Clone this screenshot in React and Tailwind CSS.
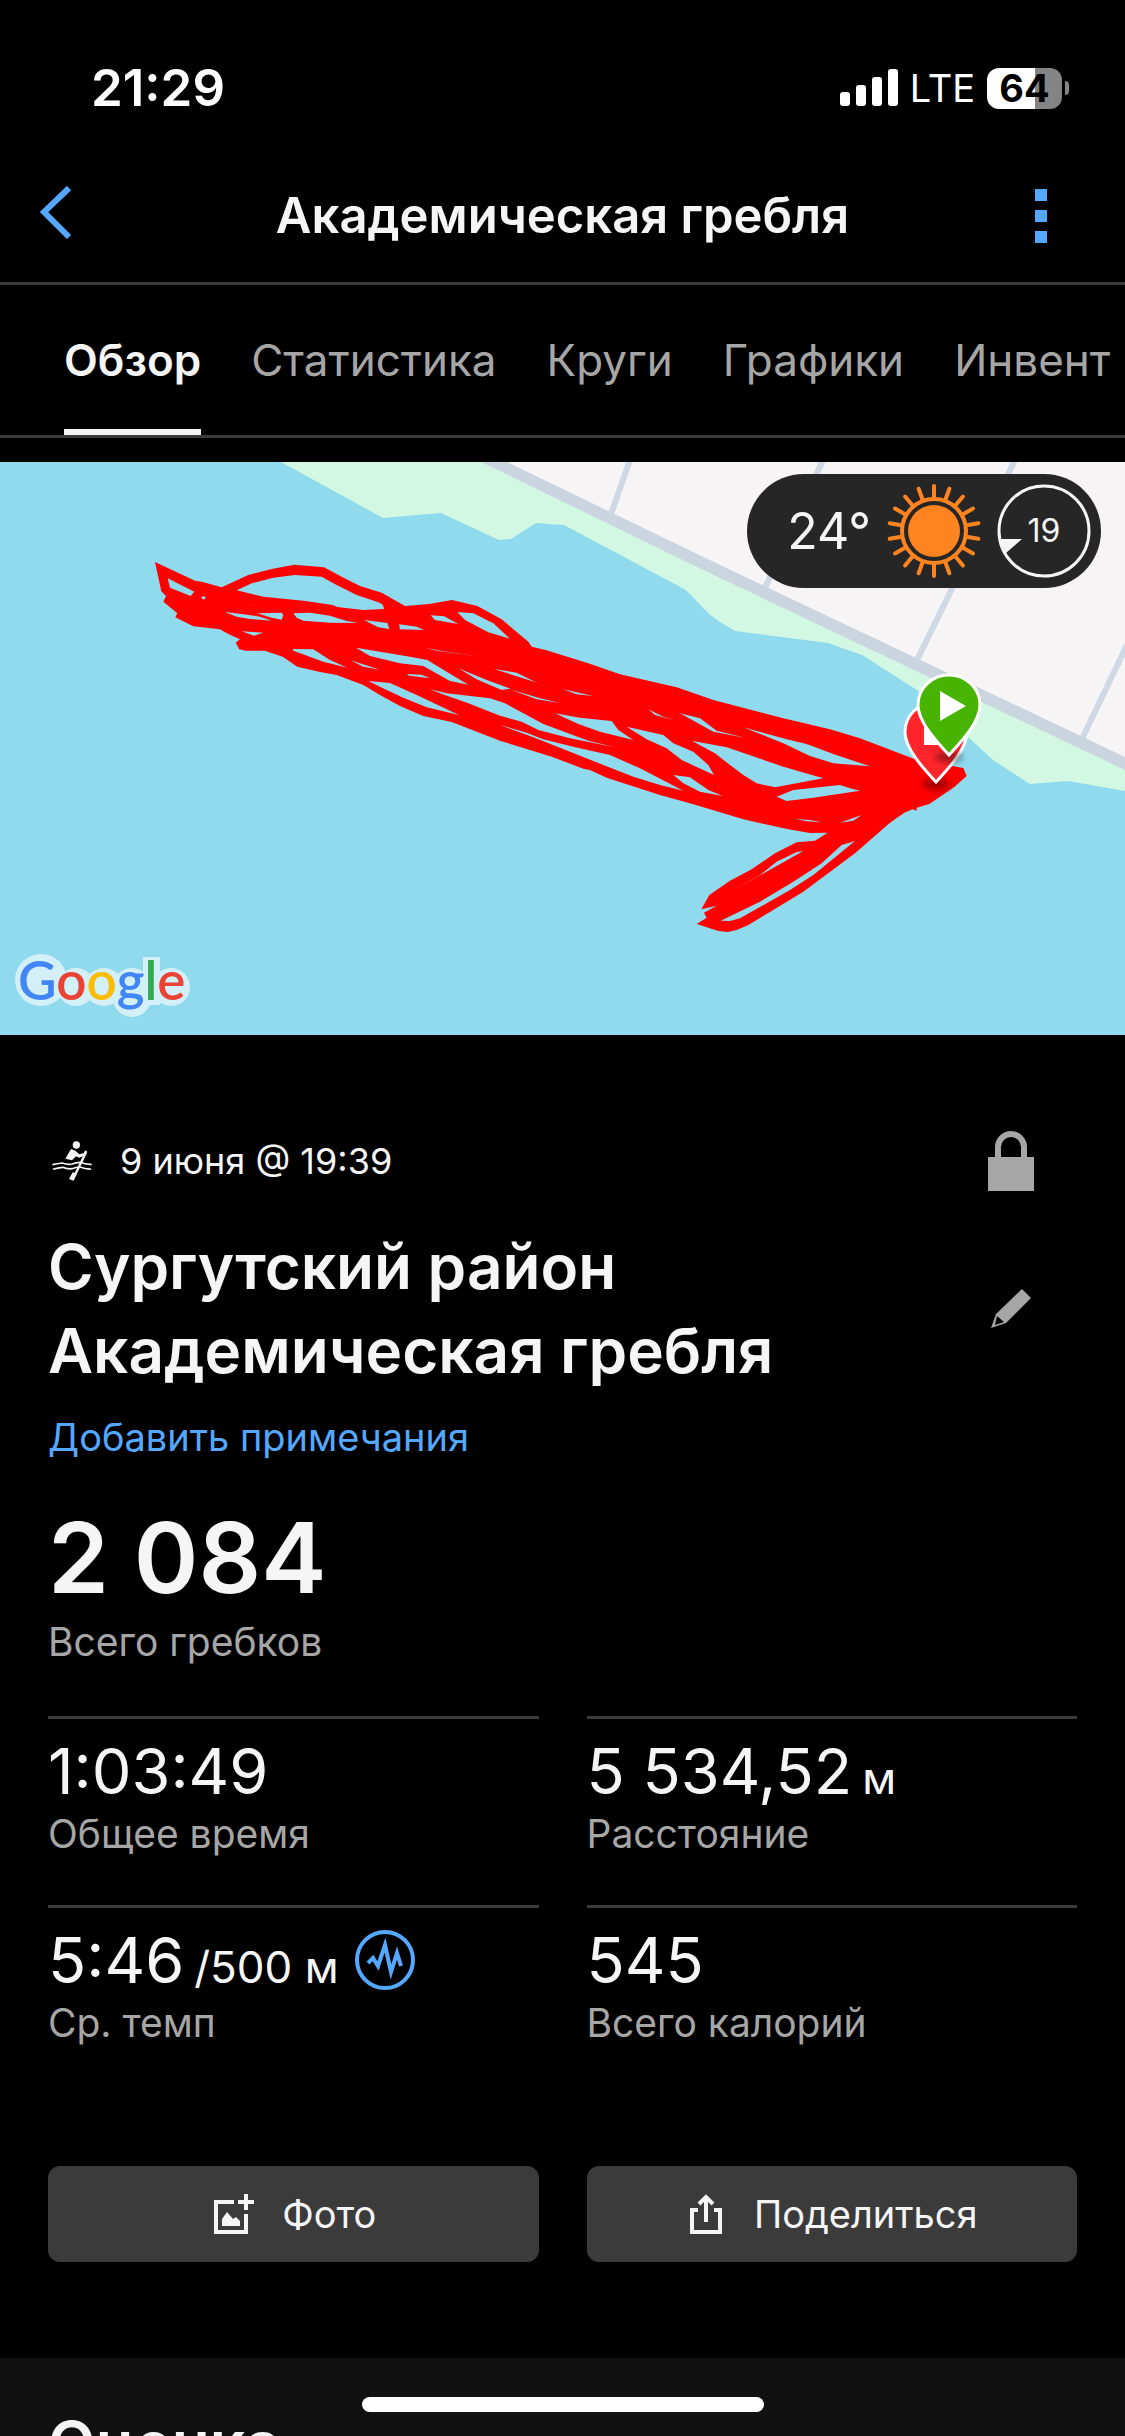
const TABS = ['Обзор', 'Статистика', 'Круги', 'Графики', 'Инвент']

const STATS = [
  { value: '1:03:49', label: 'Общее время' },
  { value: '5 534,52', unit: 'м', label: 'Расстояние' },
  { value: '5:46', unit: '/500 м', label: 'Ср. темп', graph: true },
  { value: '545', label: 'Всего калорий' },
]

// outer edge of the recorded track, in thirds of a map pixel
const TRACK =
  '45,36 165,92 185,95 245,112 325,75 395,57 463,44 552,52 605,80 660,108 725,128 795,168 868,162 936,150 1012,168 1085,208 1165,275 1175,290 1217,300 1345,340 1440,373 1610,412 1720,450 1930,505 2070,538 2160,565 2325,628 2470,654 2480,678 2442,712 2368,762 2330,773 2330,782 2318,778 2293,788 2250,818 2145,910 1990,1025 1825,1125 1790,1140 1763,1146 1735,1143 1670,1122 1700,1103 1692,1088 1730,1067 1684,1078 1708,1035 1770,992 1835,958 1905,910 1970,877 2025,872 2063,848 2010,849 1945,838 1810,808 1660,763 1560,735 1400,683 1350,660 1330,656 1235,620 1080,572 935,516 850,498 780,468 720,435 670,405 590,375 540,366 472,350 428,320 375,302 318,302 298,298 287,278 300,268 265,252 240,238 160,229 106,202 112,190 70,155 78,138 64,124'

// water that shows between the laps
const GAPS = [
  '83,85 163,125 152,138 90,113',
  '183,142 192,138 198,144 190,149',
  '290,121 335,100 400,83 465,75 545,80 590,105 650,135 715,157 727,163 733,177 670,180 592,171 578,165 490,152 370,140',
  '255,186 310,193 360,200 395,212 330,207 290,200',
  '352,190 425,188 430,195 425,209 395,203',
  '460,190 510,188 570,197 620,213 655,219 570,218 490,212 470,203',
  '672,210 742,219 748,237 715,232',
  '777,223 830,230 852,240 780,238',
  '872,196 912,199 955,222 885,210',
  '952,186 1000,190 1060,220 1110,266 1045,247 975,210',
  '305,244 370,248 342,257',
  '312,162 355,168 330,165',
  '458,297 520,298 570,330 622,353 550,335 460,302',
  '648,293 810,320 862,330 920,365 985,404 930,393 850,348 780,340 690,318',
  '632,331 720,359 670,350',
  '800,372 845,374 870,385 808,377',
  '685,393 750,399 830,435 957,495 860,472 790,443 740,420',
  '870,418 920,430 1050,445 1095,460 1210,522 1345,572 1425,592 1290,565 1195,540 1145,515 1080,497 985,460 900,430',
  '855,293 910,304 1020,320 890,302',
  '955,355 1040,390 1112,416 1085,420 1010,388',
  '1110,418 1200,445 1262,459 1190,448',
  '1062,357 1130,368 1200,403 1260,428 1185,396',
  '1080,525 1160,548 1210,568 1300,590 1410,615 1500,655 1630,722 1560,705 1480,680 1390,645 1290,605 1180,562',
  '1600,675 1650,682 1705,720 1748,738 1680,725 1630,700',
  '1245,490 1320,503 1415,513 1435,540 1480,570 1380,545 1315,522',
  '1460,530 1570,555 1600,580 1660,605 1705,645 1722,675 1625,630 1580,595 1520,568',
  '1655,572 1760,592 1930,650 2050,685 1905,712 1850,700 1810,675 1770,645 1725,610',
  '1910,740 1960,720 2100,705 2130,715 2160,722 2020,743 1940,753',
  '1965,807 2010,810 2045,817 2000,814',
  '2100,818 2165,795 2140,812',
  '1620,490 1680,505 1730,542 1815,563 1720,545',
  '1810,532 1940,568 2000,582 2080,612 2190,649 2080,640 2010,618 1930,580',
  '1525,478 1570,500 1608,512 1545,495',
  '1270,418 1360,438 1310,433',
  '1770,1027 1835,990 1990,903 1970,906 1910,935 1860,975',
  '1742,1112 1860,1055 1960,995 2045,940 2105,885 2145,873 2100,910 2020,975 1950,1020 1880,1060 1800,1105 1770,1113',
]

const SUN_RAYS = Array.from({ length: 18 }, (_, i) => i * 20)

function StatusBar() {
  return (
    <div className="flex h-[150px] items-center justify-between pt-[26px] pr-14 pl-[91px] text-white">
      <span className="text-[51px] font-semibold">21:29</span>
      <div className="flex items-center">
        <svg className="h-[38px] w-[58px]" viewBox="0 0 58 38" fill="currentColor">
          <rect x="0" y="23" width="10" height="14" rx="3" />
          <rect x="16" y="16" width="10" height="21" rx="3" />
          <rect x="32" y="8" width="10" height="29" rx="3" />
          <rect x="48" y="0" width="10" height="37" rx="3" />
        </svg>
        <span className="ml-3 text-[38px]">LTE</span>
        <div className="ml-3 flex items-center gap-[3px]">
          <div className="flex h-[41px] w-[75px] items-center justify-center rounded-xl bg-linear-to-r from-white from-64% to-[#848484] to-64% text-[38px] font-bold text-black">
            64
          </div>
          <div className="h-[14px] w-1 rounded-r-full bg-[#848484]" />
        </div>
      </div>
    </div>
  )
}

function Header() {
  return (
    <header className="flex h-[135px] items-center border-b-3 border-[#3b3b3b]">
      <button type="button" aria-label="Назад" className="flex w-[90px] justify-start pl-10 text-[#54a8ff]">
        <svg className="h-[60px] w-8" viewBox="0 0 32 60" fill="none" stroke="currentColor" strokeWidth="6">
          <path d="M29 2 4 26l25 25" />
        </svg>
      </button>
      <h1 className="flex-1 text-center text-[49px] font-semibold">Академическая гребля</h1>
      <button type="button" aria-label="Меню" className="flex w-[90px] justify-start text-[#54a8ff]">
        <svg className="h-[54px] w-3" viewBox="0 0 12 54" fill="currentColor">
          <path d="M0 0h12v12H0zM0 21h12v12H0zM0 42h12v12H0z" />
        </svg>
      </button>
    </header>
  )
}

function Tabs() {
  return (
    <nav className="flex h-[153px] gap-[50px] overflow-hidden border-b-3 border-[#3b3b3b] pl-16 text-[44px] whitespace-nowrap">
      {TABS.map((tab, i) => (
        <button
          key={tab}
          type="button"
          className={
            i === 0
              ? 'border-y-6 border-t-transparent border-b-[#f5f5f5] font-semibold text-[#f5f5f5]'
              : 'border-y-6 border-transparent text-[#a6a6a6]'
          }
        >
          {tab}
        </button>
      ))}
    </nav>
  )
}

function Pin({ x, y, color, children }) {
  return (
    <g transform={`translate(${x} ${y})`}>
      <ellipse cy="2" rx="14" ry="6" fill="#000" opacity="0.35" filter="url(#soft)" />
      <path
        d="M0 0C-12-13-31-33-31-50a31 30 0 1 1 62 0C31-33 12-13 0 0Z"
        fill={color}
        stroke="#fff"
        strokeWidth="3"
      />
      {children}
    </g>
  )
}

function Weather() {
  return (
    <div className="absolute top-3 right-6 flex h-[114px] items-center rounded-full bg-[#262626] pr-[10px] pl-10">
      <span className="text-[50px]">24°</span>
      <svg className="ml-4 size-[94px]" viewBox="-47 -47 94 94" fill="none" stroke="#ff841f" strokeWidth="4">
        <circle r="26" fill="#ff841f" stroke="none" />
        <circle r="32" />
        {SUN_RAYS.map((a) => (
          <path key={a} d="M0-33v-12" strokeLinecap="round" transform={`rotate(${a})`} />
        ))}
      </svg>
      <div className="relative ml-4 flex size-[94px] items-center justify-center">
        <svg className="absolute inset-0" viewBox="-47 -47 94 94">
          <circle r="45" fill="none" stroke="#f5f5f5" strokeWidth="3" />
          <path d="M-45 8h23l-16 14z" fill="#f5f5f5" />
        </svg>
        <span className="text-[32px]">19</span>
      </div>
    </div>
  )
}

function GoogleLogo() {
  return (
    <g>
      <g fill="#d3f0f8">
        <circle cx="41" cy="980" r="26" />
        <circle cx="76" cy="987" r="19" />
        <circle cx="104" cy="987" r="19" />
        <circle cx="132" cy="987" r="19" />
        <circle cx="132" cy="998" r="19" />
        <path d="M143 957h17v48h-17z" />
        <circle cx="171" cy="987" r="19" />
      </g>
      <text x="18" y="1000" className="font-[Lato,sans-serif] text-[53px] font-semibold">
        <tspan fill="#4285f4">G</tspan>
        <tspan fill="#ea4335">o</tspan>
        <tspan fill="#fbbc04">o</tspan>
        <tspan fill="#4285f4">g</tspan>
        <tspan fill="#34a853">l</tspan>
        <tspan fill="#ea4335">e</tspan>
      </text>
    </g>
  )
}

function RouteMap() {
  return (
    <div className="relative mt-6">
      <svg className="block w-full" viewBox="0 462 1125 573">
        <filter id="soft" x="-50%" y="-100%" width="200%" height="300%">
          <feGaussianBlur stdDeviation="3" />
        </filter>
        <rect y="462" width="1125" height="573" fill="#90daee" />
        <path
          d="M281 462 383 518 441 513 499 540 511 539 536 523 564 525 686 590 709 614 720 622 735 631 828 643 862 655 920 692 968 737 993 760 1030 784 1068 781 1125 791V462Z"
          fill="#d2f7e2"
        />
        <path d="M494 462 720 569 1125 763V462Z" fill="#f6f4f5" />
        <path d="M630 460 611 514M823 460 765 588M1015 460 917 660M1127 645 1081 741" stroke="#cfd9e3" strokeWidth="6" />
        <path d="M481 462H507L720 565 1125 757V770L720 578Z" fill="#cbd5df" />
        <g transform="translate(140 550) scale(0.33333)">
          <polygon points={TRACK} fill="#f00" />
          {GAPS.map((points) => (
            <polygon key={points} points={points} fill="#90daee" />
          ))}
        </g>
        <Pin x={936} y={782} color="#ff252b">
          <path d="M-12-61h24v24h-24z" fill="#fff" />
        </Pin>
        <Pin x={949} y={755} color="#46b400">
          <path d="M-9-64 17-49-9-34z" fill="#fff" />
        </Pin>
        <GoogleLogo />
      </svg>
      <Weather />
    </div>
  )
}

function RowingIcon() {
  return (
    <svg className="size-10" viewBox="0 0 120 120" fill="currentColor">
      <circle cx="73" cy="12" r="11" />
      <path d="M57 24 70 29 82 40 96 36 99 28 106 32 101 43 82 50 72 46 60 58 40 53Z" />
      <path d="M101 36 70 100" stroke="currentColor" strokeWidth="7" />
      <path d="M62 94 75 98 65 119 51 114Z" />
      <path
        d="M1 71q15-3 30-5 15 6 29 3 12-5 24-5 17 7 35 6M3 85q14-5 29-6 14 6 28 4 12-5 24-5 17 7 33 6"
        fill="none"
        stroke="currentColor"
        strokeWidth="5"
      />
    </svg>
  )
}

function LockIcon() {
  return (
    <svg className="h-[60px] w-12" viewBox="0 0 48 60">
      <path d="M11 28V16a13 13 0 0 1 26 0v12" fill="none" stroke="currentColor" strokeWidth="6" />
      <path d="M1 26h46v34H1z" fill="currentColor" />
    </svg>
  )
}

function PencilIcon() {
  return (
    <svg className="size-10" viewBox="0 0 40 40" fill="currentColor">
      <path fillRule="evenodd" d="M31 0 40 9 15 34 0 39 5 25ZM6 27 4 36 13 33Z" />
    </svg>
  )
}

function GraphIcon() {
  return (
    <svg className="size-[60px]" viewBox="0 0 60 60" fill="none" stroke="currentColor">
      <circle cx="30" cy="30" r="28" strokeWidth="4" />
      <path d="M13 33 18 28 23 36 30 15 36 42 42 23 46 36" strokeWidth="4" />
    </svg>
  )
}

function PhotoIcon() {
  return (
    <svg className="size-10" viewBox="0 0 40 40" fill="currentColor">
      <path d="M20 6v4H4v26h26V20h4v20H0V6z" />
      <path d="M30 0h4v6h6v4h-6v6h-4v-6h-6V6h6z" />
      <path d="M8 25 13 18 19 25 22 23 26 27V32H8z" />
    </svg>
  )
}

function ShareIcon() {
  return (
    <svg className="h-10 w-8" viewBox="0 0 32 40" fill="none" stroke="currentColor" strokeWidth="4">
      <path d="M8 16H2v22h28V16h-6" />
      <path d="M16 28V3M9 10l7-7 7 7" />
    </svg>
  )
}

function Stat({ value, unit, label, graph }) {
  return (
    <div className="border-t-3 border-[#3b3b3b] pt-4">
      <div className="flex h-[72px] items-center">
        <p className="flex items-baseline gap-[10px] text-[63px] leading-[72px]">
          {value}
          {unit && <span className="text-[44px] leading-none">{unit}</span>}
        </p>
        {graph && (
          <button type="button" aria-label="График темпа" className="ml-4 text-[#54a8ff]">
            <GraphIcon />
          </button>
        )}
      </div>
      <p className="mt-[3px] text-[39px] leading-12 text-[#a6a6a6]">{label}</p>
    </div>
  )
}

export default function App() {
  return (
    <div className="relative h-screen overflow-hidden bg-black font-[Inter,sans-serif] text-[#f5f5f5]">
      <StatusBar />
      <Header />
      <Tabs />
      <RouteMap />

      <main className="px-12 pt-24 pb-24">
        <div className="flex h-[60px] items-center">
          <div className="flex flex-1 items-center gap-7 pl-1 text-[36px]">
            <RowingIcon />
            <span>9 июня @ 19:39</span>
          </div>
          <button type="button" aria-label="Доступ" className="flex w-[132px] justify-center text-[#a6a6a6]">
            <LockIcon />
          </button>
        </div>

        <div className="mt-[34px] flex items-center">
          <h2 className="flex-1 text-[62px] leading-[84px] font-semibold">
            Сургутский район
            <br />
            Академическая гребля
          </h2>
          <button type="button" aria-label="Изменить" className="flex w-[132px] justify-center text-[#a6a6a6]">
            <PencilIcon />
          </button>
        </div>

        <a href="#notes" className="mt-5 block text-[38px] leading-12 text-[#54a8ff]">
          Добавить примечания
        </a>

        <p className="mt-12 text-[98px] leading-none font-semibold">2 084</p>
        <p className="mt-[11px] text-[39px] leading-12 text-[#a6a6a6]">Всего гребков</p>

        <div className="mt-[50px] grid grid-cols-2 gap-x-12 gap-y-[47px]">
          {STATS.map((stat) => (
            <Stat key={stat.label} {...stat} />
          ))}
        </div>

        <div className="mt-[119px] grid grid-cols-2 gap-x-12 text-[38px]">
          <button type="button" className="flex h-24 items-center justify-center gap-7 rounded-xl bg-[#3b3b3b] pl-1">
            <PhotoIcon />
            Фото
          </button>
          <button type="button" className="flex h-24 items-center justify-center gap-8 rounded-xl bg-[#3b3b3b] pl-1">
            <ShareIcon />
            Поделиться
          </button>
        </div>
      </main>

      <section className="bg-[#111] px-12 pt-11 pb-12">
        <h2 className="text-[62px] leading-[84px] font-semibold">Оценка</h2>
      </section>

      <div className="absolute bottom-6 left-1/2 h-[15px] w-[402px] -translate-x-1/2 rounded-full bg-white" />
    </div>
  )
}
